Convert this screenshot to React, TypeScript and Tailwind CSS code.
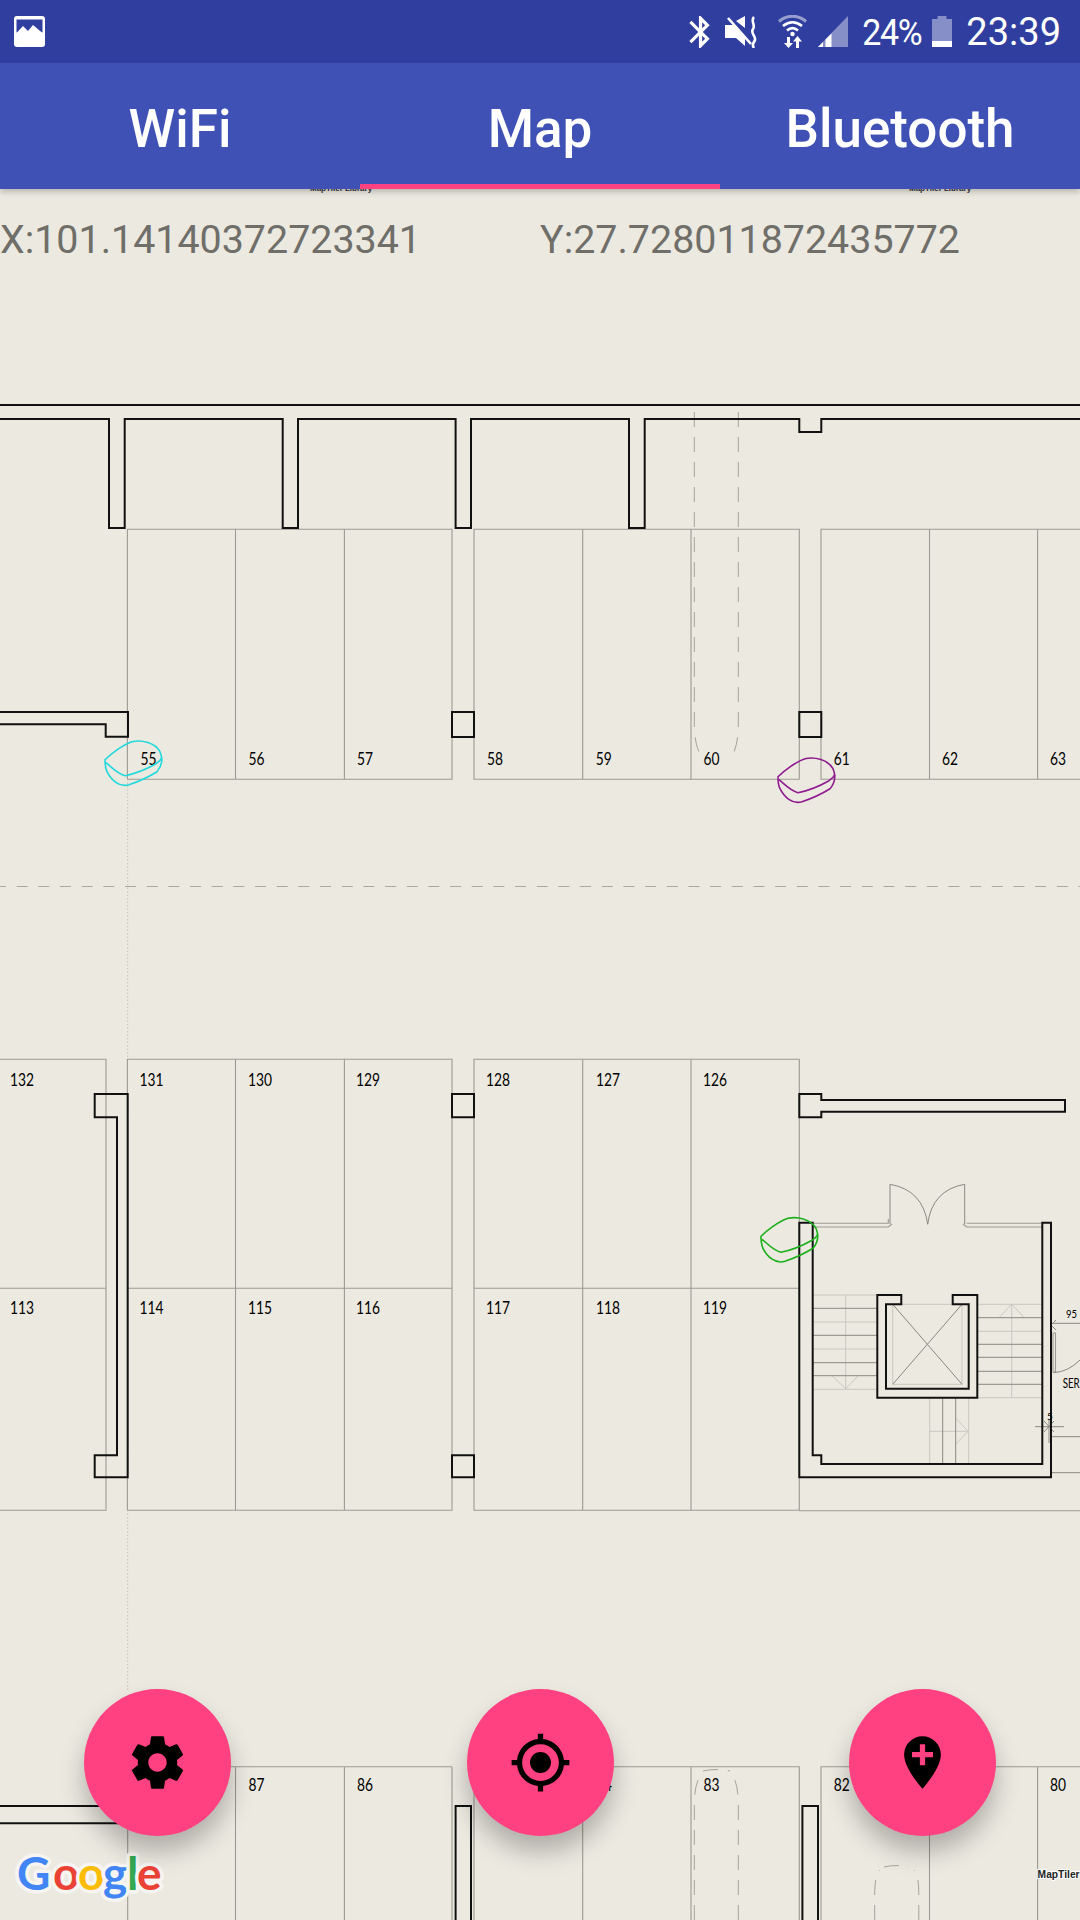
const WALLS = [
  "M0 419H109V528H124.7V419H282.7V528H298V419H455.6V528H471V419H629V528H644.7V419H799.3V432H821.3V419H1080",
  "M0 712H128V736.7H105.7V724.3H0",
  "M452 712H474V737H452Z",
  "M799.3 712H821.3V737H799.3Z",
  "M127.7 1094V1477.3H94.7V1455.3H117V1117.3H94.7V1094Z",
  "M452 1094H474V1117.3H452Z",
  "M452 1455.3H474V1477.3H452Z",
  "M799.3 1094H821.3V1100H1065V1111.7H821.3V1117.3H799.3Z",
  "M799.3 1222.7H812.7V1455.3H821.3V1464H1042.3V1222.7H1051V1477.3H799.3Z",
  "M877.3 1295H901.3V1304.3H886V1388.7H968.7V1304.3H952.7V1295H977.3V1397.7H877.3Z",
  "M0 1806H120",
  "M0 1823.3H120",
  "M455.6 1920V1806H471V1920",
  "M802.4 1920V1806H818V1920",
];

const SLOT_LINES = [
  "M127.4 529.3H452V779.3H127.4Z",
  "M235.5 529.3V779.3M344.4 529.3V779.3",
  "M474 529.3H799.3V779.3H474Z",
  "M582.7 529.3V779.3M691 529.3V779.3",
  "M1080 529.3H821V779.3H1080",
  "M929.5 529.3V779.3M1037.6 529.3V779.3",
  "M0 1059.3H106V1510.3H0M0 1288.3H106",
  "M127.4 1059.3H452V1510.3H127.4Z",
  "M127.4 1288.3H452M235.5 1059.3V1510.3M344.4 1059.3V1510.3",
  "M474 1059.3H799.3V1510.3H474Z",
  "M474 1288.3H799.3M582.7 1059.3V1510.3M691 1059.3V1510.3",
  "M799.3 1510.7H1080",
  "M127.7 1825V1920M235.5 1766.7V1920M344.4 1766.7V1920M452 1766.7V1920M127.7 1766.7H452",
  "M474 1920V1766.7H799.3V1920M582.7 1766.7V1920M691 1766.7V1920",
  "M1080 1766.7H821V1920M929.5 1766.7V1920M1037.6 1766.7V1920",
  "M812.7 1223.3H888.3V1219M812.7 1227H888.3L892 1224",
  "M966.7 1223.3H1041.7M966.7 1227H1041.7M966.7 1227L963 1224",
  "M1053 1333H1055.5V1372H1053Z",
];

const STAIRS_DARK = [
  "M812.7 1308.3H877.3M812.7 1335.3H877.3M812.7 1362.7H877.3M812.7 1375.7H877.3",
  "M977.3 1317.7H1041.7M977.3 1344.3H1041.7M977.3 1357.3H1041.7M977.3 1371.3H1041.7M977.3 1384.3H1041.7",
  "M942.7 1398.3V1464M955.7 1398.3V1464",
  "M892.7 1304.3L962 1384.3M962 1304.3L892.7 1384.3",
  "M890 1184.3V1224M890 1184.3Q923 1190 927.7 1224.3Q932 1190 964.7 1184.3V1224",
  "M1053.3 1372.7Q1068 1372 1080 1360M1053 1323.3H1080",
  "M1035 1426.7H1064M1049 1420V1443M1044 1421L1054 1432M1054 1421L1044 1432",
  "M1050 1436.7H1080M1051 1472.7H1080",
  "M1051 1325L1056 1320M1051 1325L1056 1330",
];

const STAIRS_LIGHT = [
  "M812.7 1295H877.3M812.7 1322H877.3M812.7 1349H877.3M812.7 1389.3H877.3",
  "M845.7 1295V1389",
  "M832.3 1376L845.7 1388.7L858 1376",
  "M977.3 1304.3H1041.7M977.3 1331.3H1041.7M977.3 1397.7H1041.7",
  "M1011.7 1304.3V1397",
  "M999 1317.7L1011.7 1304.3L1024.3 1317.7",
  "M892.7 1304.3H962M892.7 1304.3V1384.3H962V1304.3",
  "M929.7 1398.3V1464M968.7 1398.3V1464M929.7 1431.3H968M955.7 1418L968 1431.3L955.7 1444",
];

const DASHED = [
  "M694.3 412V727Q694.6 742 699 752",
  "M738.3 412V727Q738 742 734 752",
  "M694.3 1920V1806Q694 1788 699 1778M738.3 1920V1806Q738.6 1788 734 1778M703 1771Q716 1768 730 1771",
  "M874.7 1920V1892Q875 1875 880 1870M918.8 1920V1892Q918.6 1875 914 1870M884 1867Q896 1864 909 1867",
];

const LABELS: [string, number, number][] = [
  ["55", 140.5, 765], ["56", 248.6, 765], ["57", 357, 765], ["58", 487, 765], ["59", 595.8, 765],
  ["60", 703.6, 765], ["61", 833.7, 765], ["62", 942, 765], ["63", 1050, 765],
  ["132", 10, 1085.7], ["131", 139.5, 1085.7], ["130", 248, 1085.7], ["129", 356, 1085.7], ["128", 486, 1085.7],
  ["127", 596, 1085.7], ["126", 703, 1085.7],
  ["113", 10, 1313.7], ["114", 139.5, 1313.7], ["115", 248, 1313.7], ["116", 356, 1313.7], ["117", 486, 1313.7],
  ["118", 596, 1313.7], ["119", 703, 1313.7],
  ["87", 248.6, 1791], ["86", 357, 1791], ["84", 596, 1791], ["83", 703.6, 1791], ["82", 833.7, 1791], ["80", 1050, 1791],
];

const BLOB_OUTER = "M0 19C6 13 18 4 27 1C37 -1 50 2 55 11C58 18 57 25 52 31C44 36 30 42 24 44C14 47 6 39 2 31C0 27 0 23 0 19Z";
const BLOB_INNER = "M1 22C6 26 12 33 20 35C30 33 44 27 51 23C54 21 56 19 57 17";

function Blob({ x, y, color }: { x: number; y: number; color: string }) {
  return (
    <g transform={`translate(${x} ${y})`} fill="none" stroke={color} strokeWidth="1.6">
      <path d={BLOB_OUTER} />
      <path d={BLOB_INNER} />
    </g>
  );
}

function FloorPlan() {
  return (
    <svg className="absolute inset-0" width="1080" height="1920" viewBox="0 0 1080 1920">
      <g fill="none" stroke="#9c9a92" strokeWidth="1.1">
        {SLOT_LINES.map((d) => <path key={d} d={d} />)}
      </g>
      <g fill="none" stroke="#c9c7bf" strokeWidth="1">
        {STAIRS_LIGHT.map((d) => <path key={d} d={d} />)}
      </g>
      <g fill="none" stroke="#8a8881" strokeWidth="1">
        {STAIRS_DARK.map((d) => <path key={d} d={d} />)}
      </g>
      <g fill="none" stroke="#9c9a92" strokeWidth="0.9" strokeDasharray="15 10">
        {DASHED.map((d) => <path key={d} d={d} />)}
      </g>
      <path d="M0 886.5H1080" fill="none" stroke="#aaa89f" strokeWidth="1.2" strokeDasharray="11 10.67" strokeDashoffset="5" />
      <path d="M127.7 779V1059M127.7 1510V1690" fill="none" stroke="#c4c2ba" strokeWidth="1" strokeDasharray="1.5 2" />
      <path d="M0 405H1080" fill="none" stroke="#111" strokeWidth="2.2" />
      <g fill="none" stroke="#111" strokeWidth="2">
        {WALLS.map((d) => <path key={d} d={d} />)}
      </g>
      <g fill="#000" fontFamily="Lato, sans-serif" fontSize="18" fontWeight="400">
        {LABELS.map(([t, x, y]) => (
          <text key={t} x={x} y={y} textLength={t.length * 8} lengthAdjust="spacingAndGlyphs">{t}</text>
        ))}
        <text x="1066" y="1318" fontSize="11" textLength="11" lengthAdjust="spacingAndGlyphs">95</text>
        <text x="1062.7" y="1387.7" fontSize="14" textLength="17" lengthAdjust="spacingAndGlyphs">SER</text>
        <text x="1047" y="1420" fontSize="10">5</text>
      </g>
      <g fill="#333" fontFamily="Liberation Sans, sans-serif" fontSize="8" fontWeight="700">
        <text x="310" y="191">MapTiler Library</text>
        <text x="909" y="191">MapTiler Library</text>
      </g>
      <Blob x={105} y={740.7} color="#1fd9dc" />
      <Blob x={778} y={757.7} color="#8f1a90" />
      <Blob x={761} y={1217.3} color="#1bb01b" />
      <text
        x="1037.6"
        y="1878"
        fontFamily="Liberation Sans, sans-serif"
        fontSize="11"
        fontWeight="700"
        fill="#222"
        stroke="#fff"
        strokeWidth="2"
        textLength="42"
        lengthAdjust="spacingAndGlyphs"
        style={{ paintOrder: "stroke" }}
      >
        MapTiler
      </text>
      <text
        y="1890"
        fontFamily="Lato, sans-serif"
        fontSize="46"
        fontWeight="700"
        stroke="#f6f5f1"
        strokeWidth="7"
        strokeLinejoin="round"
        style={{ paintOrder: "stroke" }}
      >
        <tspan x="17" fill="#4285f4">G</tspan>
        <tspan x="53" fill="#ea4335">o</tspan>
        <tspan x="78" fill="#fbbc05">o</tspan>
        <tspan x="103" fill="#4285f4">g</tspan>
        <tspan x="127" fill="#34a853">l</tspan>
        <tspan x="137" fill="#ea4335">e</tspan>
      </text>
    </svg>
  );
}

function StatusBar() {
  return (
    <div className="flex h-[63px] items-center bg-[#303f9f] pl-[14px] pr-[19px] text-white">
      <svg width="31" height="31" viewBox="0 0 31 31">
        <rect x="0" y="0" width="31" height="31" rx="3" fill="#fff" />
        <rect x="2.5" y="3.5" width="26" height="13" fill="#303f9f" />
        <path d="M2.5 17L9 10L14 15L19 9L28.5 17V18H2.5Z" fill="#fff" />
      </svg>
      <div className="flex-1" />
      <svg width="21" height="32" viewBox="5 2 12.71 20" fill="#fff">
        <path d="M17.71 7.71L12 2h-1v7.59L6.41 5 5 6.41 10.59 12 5 17.59 6.41 19 11 14.41V22h1l5.71-5.71-4.3-4.29 4.3-4.29zM13 5.83l1.88 1.88L13 9.59V5.83zm1.88 10.46L13 18.17v-3.76l1.88 1.88z" />
      </svg>
      <svg className="ml-[15px]" width="34" height="32" viewBox="0 0 34 32">
        <path d="M0 9H9L20 20V30L11 22H0Z" fill="#fff" />
        <path d="M11 5L20 0V12Z" fill="#fff" />
        <path d="M5 1L29 25" stroke="#303f9f" strokeWidth="2" />
        <path d="M3 2L26 28" stroke="#fff" strokeWidth="2.6" />
        <path d="M29 1C25 5 31 9 28 13C25 17 31 20 30 24C29 27 26 28 29 32" fill="none" stroke="#fff" strokeWidth="2.6" />
      </svg>
      <svg className="ml-[19px]" width="29" height="33" viewBox="0 0 29 33">
        <path d="M1 6.5C9 -0.5 20 -0.5 28 6.5" fill="none" stroke="#fff" strokeOpacity="0.5" strokeWidth="3" />
        <path d="M5 11C11 6 18 6 24 11" fill="none" stroke="#fff" strokeWidth="2.6" />
        <path d="M9 15.5C12.5 12.5 16.5 12.5 20 15.5" fill="none" stroke="#fff" strokeWidth="2.6" />
        <circle cx="14.5" cy="19" r="2.2" fill="#fff" />
        <path d="M9 22H12V28H15L10.5 33L6 28H9Z" fill="#fff" />
        <path d="M19.5 21L24 26.5H21V33H18V26.5H15Z" fill="#fff" />
      </svg>
      <svg className="ml-[11px]" width="30" height="31" viewBox="0 0 30 31">
        <path d="M30 0V31H0Z" fill="#fff" fillOpacity="0.42" />
        <path d="M0 31L5 26V31ZM7.5 31V23.5L13.5 17.5V31Z" fill="#fff" />
      </svg>
      <span className="ml-[14px] origin-center scale-y-110 font-['Roboto',sans-serif] text-[34px] leading-none tracking-[-1.3px]">24%</span>
      <svg className="ml-[11px]" width="20" height="31" viewBox="0 0 20 31">
        <path d="M0 3H5.5V0H14.5V3H20V31H0Z" fill="#fff" fillOpacity="0.42" />
        <rect x="0" y="25" width="20" height="6" fill="#fff" />
      </svg>
      <span className="ml-[14px] font-['Roboto',sans-serif] text-[38px] leading-none">23:39</span>
    </div>
  );
}

function Tab({ label, active }: { label: string; active?: boolean }) {
  return (
    <div className="relative flex flex-1 items-center justify-center pt-[6px]">
      <span className="font-['Roboto',sans-serif] text-[53px] font-medium leading-none text-white">{label}</span>
      {active && <div className="absolute inset-x-0 bottom-0 h-[5px] bg-[#ff4081]" />}
    </div>
  );
}

function Fab({ path }: { path: string }) {
  return (
    <div className="flex h-[147px] w-[147px] items-center justify-center rounded-full bg-[#ff4081] shadow-[0_16px_24px_rgba(0,0,0,0.25)]">
      <svg width="63" height="63" viewBox="0 0 24 24" fill="#000">
        <path d={path} />
      </svg>
    </div>
  );
}

const SETTINGS =
  "M19.43 12.98c.04-.32.07-.64.07-.98s-.03-.66-.07-.98l2.11-1.65c.19-.15.24-.42.12-.64l-2-3.46c-.12-.22-.39-.3-.61-.22l-2.49 1c-.52-.4-1.08-.73-1.69-.98l-.38-2.65C14.46 2.18 14.25 2 14 2h-4c-.25 0-.46.18-.49.42l-.38 2.65c-.61.25-1.17.59-1.69.98l-2.49-1c-.23-.09-.49 0-.61.22l-2 3.46c-.13.22-.07.49.12.64l2.11 1.65c-.04.32-.07.65-.07.98s.03.66.07.98l-2.11 1.65c-.19.15-.24.42-.12.64l2 3.46c.12.22.39.3.61.22l2.49-1c.52.4 1.08.73 1.69.98l.38 2.65c.03.24.24.42.49.42h4c.25 0 .46-.18.49-.42l.38-2.65c.61-.25 1.17-.59 1.69-.98l2.49 1c.23.09.49 0 .61-.22l2-3.46c.12-.22.07-.49-.12-.64l-2.11-1.65zM12 15.5c-1.93 0-3.5-1.57-3.5-3.5s1.57-3.5 3.5-3.5 3.5 1.57 3.5 3.5-1.57 3.5-3.5 3.5z";
const GPS =
  "M12 8c-2.21 0-4 1.79-4 4s1.79 4 4 4 4-1.79 4-4-1.79-4-4-4zm8.94 3c-.46-4.17-3.77-7.48-7.94-7.94V1h-2v2.06C6.83 3.52 3.52 6.83 3.06 11H1v2h2.06c.46 4.17 3.77 7.48 7.94 7.94V23h2v-2.06c4.17-.46 7.48-3.77 7.94-7.94H23v-2h-2.06zM12 19c-3.87 0-7-3.13-7-7s3.13-7 7-7 7 3.13 7 7-3.13 7-7 7z";
const ADD_PIN =
  "M12 2C8.14 2 5 5.14 5 9c0 5.25 7 13 7 13s7-7.75 7-13c0-3.86-3.14-7-7-7zm4 8h-3v3h-2v-3H8V8h3V5h2v3h3v2z";

export default function App() {
  return (
    <div className="relative flex h-[1920px] w-[1080px] flex-col overflow-hidden bg-[#ece9e1]">
      <FloorPlan />
      <div className="relative z-10 shadow-[0_3px_6px_rgba(0,0,0,0.22)]">
        <StatusBar />
        <div className="flex h-[126px] bg-[#3f51b5]">
          <Tab label="WiFi" />
          <Tab label="Map" active />
          <Tab label="Bluetooth" />
        </div>
      </div>
      <div className="relative flex h-[98px] items-center pt-[3px] font-['Roboto',sans-serif] text-[39.4px] leading-none text-[#6f6e69]">
        <span className="w-[540px]">X:101.14140372723341</span>
        <span className="flex-1">Y:27.728011872435772</span>
      </div>
      <div className="absolute inset-x-0 bottom-[84px] z-10 flex justify-between px-[84px]">
        <Fab path={SETTINGS} />
        <Fab path={GPS} />
        <Fab path={ADD_PIN} />
      </div>
    </div>
  );
}
